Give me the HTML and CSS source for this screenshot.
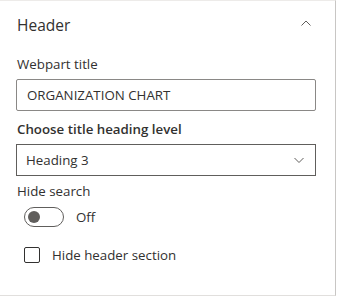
FILE: index.html
```html
<!DOCTYPE html>
<html lang="en">
<head>
    <meta charset="UTF-8">
    <title>Header settings</title>
    <link rel="stylesheet" href="styles.css">
</head>
<body>
    <div class="panel">
        <div class="group-header">
            <span class="group-title">Header</span>
            <svg class="chevron" width="12" height="8" viewBox="0 0 12 8">
                <path d="M1.5 6.5 L6 2 L10.5 6.5" fill="none" stroke="#605e5c" stroke-width="1"/>
            </svg>
        </div>

        <div class="field">
            <label for="title">Webpart title</label>
            <input type="text" id="title" value="ORGANIZATION CHART">
        </div>

        <div class="field">
            <label class="strong">Choose title heading level</label>
            <div class="dropdown">
                <span>Heading 3</span>
                <svg width="12" height="8" viewBox="0 0 12 8">
                    <path d="M1.5 2 L6 6.5 L10.5 2" fill="none" stroke="#605e5c" stroke-width="1"/>
                </svg>
            </div>
        </div>

        <div class="field tight">
            <label>Hide search</label>
            <div class="toggle-row">
                <span class="toggle"><span class="knob"></span></span>
                <span>Off</span>
            </div>
        </div>

        <div class="check-row">
            <span class="checkbox"></span>
            <span>Hide header section</span>
        </div>
    </div>
</body>
</html>
```

FILE: styles.css
```css
body {
    margin: 0;
    font-family: "Open Sans", "Noto Sans", sans-serif;
    color: #323130;
    background: #fff;
}
.panel {
    width: 336px;
    height: 296px;
    box-sizing: border-box;
    border-top: 1px solid #edebe9;
    border-bottom: 1px solid #e1dfdd;
    border-right: 1px solid #c8c6c4;
    padding: 0 19px 0 16px;
}
.group-header {
    display: flex;
    justify-content: space-between;
    align-items: center;
    height: 44px;
    padding-right: 4px;
}
.group-title {
    font-size: 15.5px;
    padding: 3px 0 0 1px;
}
.field {
    margin-top: 4px;
}
.field + .field {
    margin-top: 3px;
}
.field.tight {
    margin-top: 0;
}
label {
    display: block;
    font-size: 13.3px;
    line-height: 20px;
    padding: 5px 0 5px 1px;
}
.strong {
    font-weight: 600;
}
input[type="text"] {
    display: block;
    width: 100%;
    height: 32px;
    box-sizing: border-box;
    border: 1px solid #8a8886;
    border-radius: 2px;
    padding: 0 10px;
    font-family: inherit;
    font-size: 13.3px;
    color: #323130;
}
.dropdown {
    display: flex;
    justify-content: space-between;
    align-items: center;
    height: 32px;
    box-sizing: border-box;
    border: 1px solid #605e5c;
    padding: 0 10px 0 9px;
    font-size: 13.3px;
}
.toggle-row {
    display: flex;
    align-items: center;
    gap: 12px;
    font-size: 13.3px;
    padding-left: 8px;
    height: 22px;
}
.toggle {
    width: 40px;
    height: 20px;
    box-sizing: border-box;
    border: 1px solid #605e5c;
    border-radius: 10px;
    display: flex;
    align-items: center;
    padding-left: 3px;
}
.knob {
    width: 12px;
    height: 12px;
    border-radius: 50%;
    background: #605e5c;
}
.check-row {
    display: flex;
    align-items: center;
    gap: 12px;
    height: 20px;
    margin-top: 17px;
    padding-left: 8px;
    font-size: 13.3px;
}
.checkbox {
    width: 16px;
    height: 16px;
    box-sizing: border-box;
    border: 1px solid #323130;
    border-radius: 2px;
}
```
